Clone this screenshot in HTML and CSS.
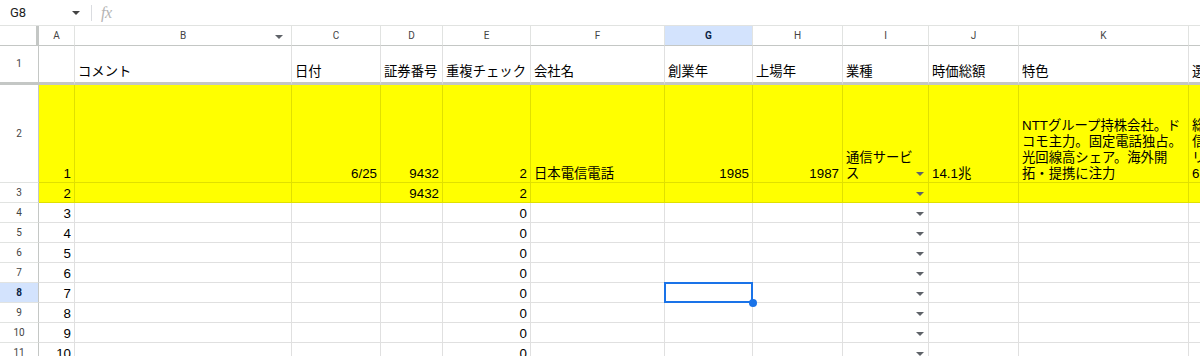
FILE: index.html
```html
<!DOCTYPE html>
<html lang="ja">
<head>
  <meta charset="UTF-8">
  <meta name="viewport" content="width=device-width, initial-scale=1.0">
  <title>銘柄リスト</title>
  <link rel="stylesheet" href="styles.css">
</head>
<body>
  <div class="formula-bar">
    <div class="name-box">
      <span class="cell-ref">G8</span>
      <span class="tri name-tri"></span>
    </div>
    <div class="divider"></div>
    <div class="fx">fx</div>
  </div>

  <div class="sheet">
    <!-- column headers -->
    <div class="corner"></div>
    <div class="colhead">A</div>
    <div class="colhead colhead-b">B<span class="tri head-tri"></span></div>
    <div class="colhead">C</div>
    <div class="colhead">D</div>
    <div class="colhead">E</div>
    <div class="colhead">F</div>
    <div class="colhead active">G</div>
    <div class="colhead">H</div>
    <div class="colhead">I</div>
    <div class="colhead">J</div>
    <div class="colhead">K</div>
    <div class="colhead">L</div>

    <!-- row 1 (frozen) -->
    <div class="rowhead frozen">1</div>
    <div class="c frozen"></div>
    <div class="c frozen">コメント</div>
    <div class="c frozen">日付</div>
    <div class="c frozen">証券番号</div>
    <div class="c frozen">重複チェック</div>
    <div class="c frozen">会社名</div>
    <div class="c frozen">創業年</div>
    <div class="c frozen">上場年</div>
    <div class="c frozen">業種</div>
    <div class="c frozen">時価総額</div>
    <div class="c frozen">特色</div>
    <div class="c frozen">選定理由</div>

    <!-- row 2 -->
    <div class="rowhead">2</div>
    <div class="c hl num">1</div>
    <div class="c hl"></div>
    <div class="c hl num">6/25</div>
    <div class="c hl num">9432</div>
    <div class="c hl num">2</div>
    <div class="c hl">日本電信電話</div>
    <div class="c hl num">1985</div>
    <div class="c hl num">1987</div>
    <div class="c hl dd"><span>通信サービ<br>ス</span><span class="tri"></span></div>
    <div class="c hl">14.1兆</div>
    <div class="c hl"><span>NTTグループ持株会社。ド<br>コモ主力。固定電話独占。<br>光回線高シェア。海外開<br>拓・提携に注力</span></div>
    <div class="c hl"><span>総合通信の最大手<br>信頼性の高い配当<br>リスクが小さい<br>6期連続増配</span></div>

    <!-- row 3 -->
    <div class="rowhead">3</div>
    <div class="c hl num">2</div>
    <div class="c hl"></div>
    <div class="c hl"></div>
    <div class="c hl num">9432</div>
    <div class="c hl num">2</div>
    <div class="c hl"></div>
    <div class="c hl"></div>
    <div class="c hl"></div>
    <div class="c hl dd"><span></span><span class="tri"></span></div>
    <div class="c hl"></div>
    <div class="c hl"></div>
    <div class="c hl"></div>

    <!-- row 4 -->
    <div class="rowhead">4</div>
    <div class="c num">3</div>
    <div class="c"></div><div class="c"></div><div class="c"></div>
    <div class="c num">0</div>
    <div class="c"></div><div class="c"></div><div class="c"></div>
    <div class="c dd"><span></span><span class="tri"></span></div>
    <div class="c"></div><div class="c"></div><div class="c"></div>

    <!-- row 5 -->
    <div class="rowhead">5</div>
    <div class="c num">4</div>
    <div class="c"></div><div class="c"></div><div class="c"></div>
    <div class="c num">0</div>
    <div class="c"></div><div class="c"></div><div class="c"></div>
    <div class="c dd"><span></span><span class="tri"></span></div>
    <div class="c"></div><div class="c"></div><div class="c"></div>

    <!-- row 6 -->
    <div class="rowhead">6</div>
    <div class="c num">5</div>
    <div class="c"></div><div class="c"></div><div class="c"></div>
    <div class="c num">0</div>
    <div class="c"></div><div class="c"></div><div class="c"></div>
    <div class="c dd"><span></span><span class="tri"></span></div>
    <div class="c"></div><div class="c"></div><div class="c"></div>

    <!-- row 7 -->
    <div class="rowhead">7</div>
    <div class="c num">6</div>
    <div class="c"></div><div class="c"></div><div class="c"></div>
    <div class="c num">0</div>
    <div class="c"></div><div class="c"></div><div class="c"></div>
    <div class="c dd"><span></span><span class="tri"></span></div>
    <div class="c"></div><div class="c"></div><div class="c"></div>

    <!-- row 8 -->
    <div class="rowhead active">8</div>
    <div class="c num">7</div>
    <div class="c"></div><div class="c"></div><div class="c"></div>
    <div class="c num">0</div>
    <div class="c"></div>
    <div class="c sel"></div>
    <div class="c"></div>
    <div class="c dd"><span></span><span class="tri"></span></div>
    <div class="c"></div><div class="c"></div><div class="c"></div>

    <!-- row 9 -->
    <div class="rowhead">9</div>
    <div class="c num">8</div>
    <div class="c"></div><div class="c"></div><div class="c"></div>
    <div class="c num">0</div>
    <div class="c"></div><div class="c"></div><div class="c"></div>
    <div class="c dd"><span></span><span class="tri"></span></div>
    <div class="c"></div><div class="c"></div><div class="c"></div>

    <!-- row 10 -->
    <div class="rowhead">10</div>
    <div class="c num">9</div>
    <div class="c"></div><div class="c"></div><div class="c"></div>
    <div class="c num">0</div>
    <div class="c"></div><div class="c"></div><div class="c"></div>
    <div class="c dd"><span></span><span class="tri"></span></div>
    <div class="c"></div><div class="c"></div><div class="c"></div>

    <!-- row 11 -->
    <div class="rowhead">11</div>
    <div class="c num">10</div>
    <div class="c"></div><div class="c"></div><div class="c"></div>
    <div class="c num">0</div>
    <div class="c"></div><div class="c"></div><div class="c"></div>
    <div class="c dd"><span></span><span class="tri"></span></div>
    <div class="c"></div><div class="c"></div><div class="c"></div>
  </div>
</body>
</html>
```

FILE: styles.css
```css
* {
  margin: 0;
  padding: 0;
  box-sizing: border-box;
}

body {
  width: 1200px;
  height: 356px;
  overflow: hidden;
  background: #fff;
  font-family: 'Liberation Sans', Arial, 'Noto Sans CJK JP', sans-serif;
  color: #000;
}

/* formula bar */
.formula-bar {
  height: 26px;
  display: flex;
  align-items: center;
  border-bottom: 1px solid #e1e3e1;
}

.name-box {
  width: 86px;
  padding-left: 10px;
  padding-right: 6px;
  display: flex;
  align-items: center;
  justify-content: space-between;
}

.cell-ref {
  font-family: Roboto, 'Liberation Sans', sans-serif;
  font-size: 13px;
  color: #1f1f1f;
}

.divider {
  width: 1px;
  height: 16px;
  background: #dadce0;
  margin-left: 5px;
}

.fx {
  margin-left: 9px;
  font-family: 'Liberation Serif', serif;
  font-style: italic;
  font-size: 16px;
  color: #b4b4b4;
  letter-spacing: -0.5px;
}

/* little dropdown triangles */
.tri {
  width: 0;
  height: 0;
  border-left: 4px solid transparent;
  border-right: 4px solid transparent;
  border-top: 4px solid #5f6368;
}

.name-tri {
  border-top-color: #444;
}

/* grid */
.sheet {
  display: grid;
  grid-template-columns: 39px 36px 217px 89px 62px 88px 134px 88px 90px 86px 90px 170px 200px;
  grid-template-rows: 20px 39px 98px repeat(9, 20px);
  width: 1389px;
}

.corner {
  border-right: 3px solid #c4c7c5;
  border-bottom: 1px solid #c4c7c5;
}

.colhead {
  display: flex;
  align-items: center;
  justify-content: center;
  font-family: Roboto, 'Liberation Sans', sans-serif;
  font-size: 10px;
  color: #444;
  border-right: 1px solid #e1e3e1;
  border-bottom: 1px solid #c4c7c5;
}

.colhead-b {
  position: relative;
}

.head-tri {
  position: absolute;
  right: 8px;
  top: 9px;
}

.colhead.active {
  background: #d3e3fd;
  color: #0b1f45;
  font-weight: 700;
}

.rowhead {
  display: flex;
  align-items: center;
  justify-content: center;
  font-family: Roboto, 'Liberation Sans', sans-serif;
  font-size: 10px;
  color: #444;
  border-right: 1px solid #c4c7c5;
  border-bottom: 1px solid #e1e3e1;
}

.rowhead.active {
  background: #d3e3fd;
  color: #0b1f45;
  font-weight: 700;
}

.c {
  display: flex;
  align-items: flex-end;
  padding: 0 3px;
  font-size: 13.33px;
  line-height: 16px;
  white-space: nowrap;
  overflow: hidden;
  border-right: 1px solid rgba(0, 0, 0, 0.12);
  border-bottom: 1px solid rgba(0, 0, 0, 0.12);
}

.frozen {
  border-bottom: 3px solid #c4c7c5;
  padding-bottom: 2px;
}

.hl {
  background: #ffff00;
}

.num {
  justify-content: flex-end;
}

.dd {
  justify-content: space-between;
}

.dd .tri {
  margin-bottom: 6px;
  margin-right: 1px;
}

/* active cell */
.sel {
  position: relative;
  overflow: visible;
}

.sel::after {
  content: "";
  position: absolute;
  left: -1px;
  top: -1px;
  right: -1px;
  bottom: -1px;
  border: 2px solid #1a73e8;
}

.sel::before {
  content: "";
  position: absolute;
  right: -5px;
  bottom: -5px;
  width: 8px;
  height: 8px;
  border-radius: 50%;
  background: #1a73e8;
  z-index: 1;
}
```
